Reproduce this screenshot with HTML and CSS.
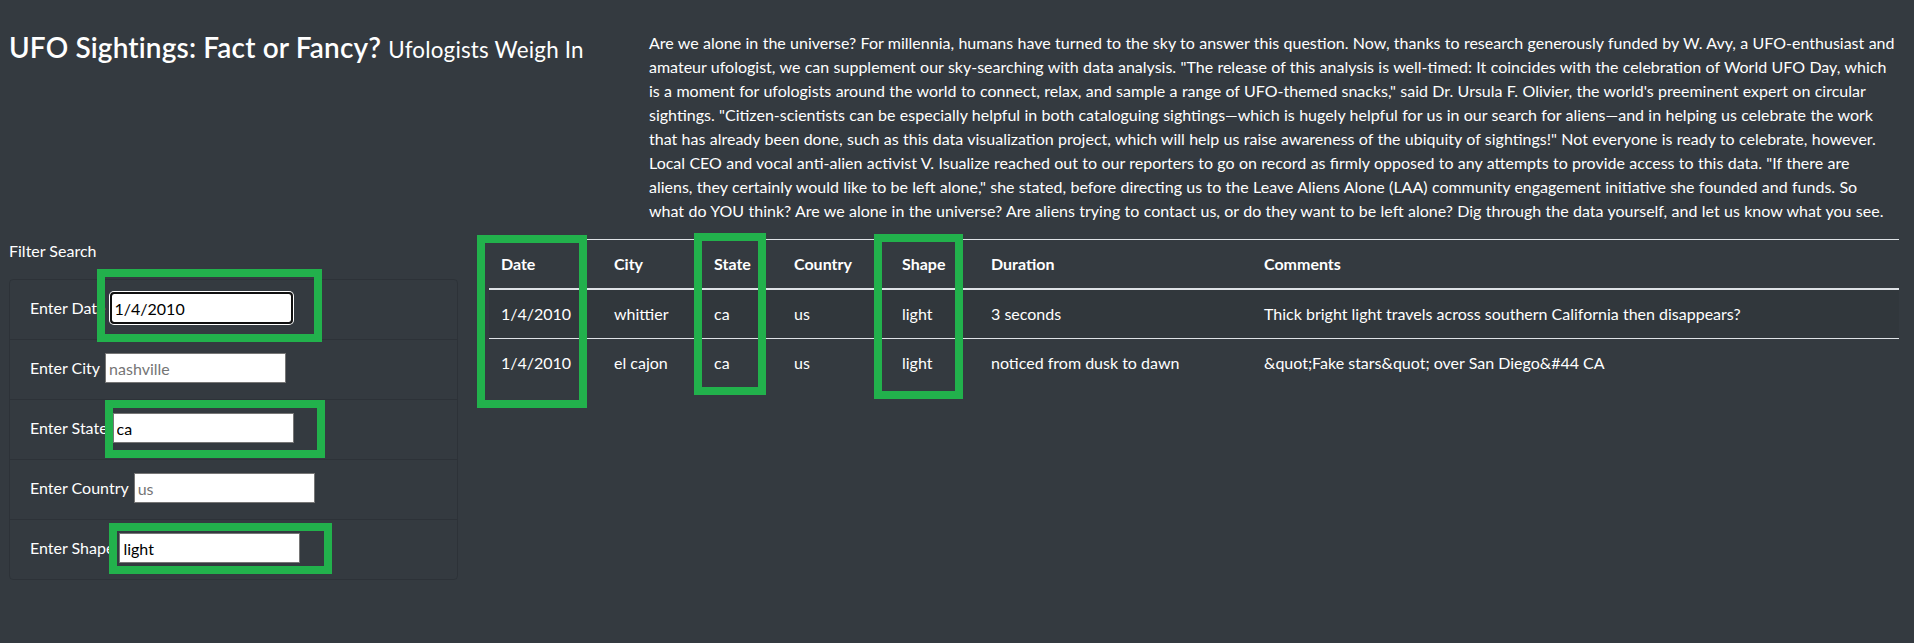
FILE: index.html
```html
<!DOCTYPE html>
<html lang="en">
<head>
<meta charset="utf-8">
<title>UFO Sightings: Fact or Fancy?</title>
<link rel="stylesheet" href="styles.css">
</head>
<body>
<div class="page">
  <header class="intro">
    <h3 class="title">UFO Sightings: Fact or Fancy? <small class="subtitle">Ufologists Weigh In</small></h3>
    <p class="lead-text">Are we alone in the universe? For millennia, humans have turned to the sky to answer this question. Now, thanks to research generously funded by W. Avy, a UFO-enthusiast and amateur ufologist, we can supplement our sky-searching with data analysis. "The release of this analysis is well-timed: It coincides with the celebration of World UFO Day, which is a moment for ufologists around the world to connect, relax, and sample a range of UFO-themed snacks," said Dr. Ursula F. Olivier, the world's preeminent expert on circular sightings. "Citizen-scientists can be especially helpful in both cataloguing sightings—which is hugely helpful for us in our search for aliens—and in helping us celebrate the work that has already been done, such as this data visualization project, which will help us raise awareness of the ubiquity of sightings!" Not everyone is ready to celebrate, however. Local CEO and vocal anti-alien activist V. Isualize reached out to our reporters to go on record as firmly opposed to any attempts to provide access to this data. "If there are aliens, they certainly would like to be left alone," she stated, before directing us to the Leave Aliens Alone (LAA) community engagement initiative she founded and funds. So what do YOU think? Are we alone in the universe? Are aliens trying to contact us, or do they want to be left alone? Dig through the data yourself, and let us know what you see.</p>
  </header>

  <main class="content">
    <aside class="filters">
      <p class="filter-label">Filter Search</p>
      <ul class="filter-list">
        <li class="filter-item"><label class="filter-name" for="datetime">Enter Date</label><input id="datetime" class="filter-input is-active" type="text" value="1/4/2010"></li>
        <li class="filter-item"><label class="filter-name" for="city">Enter City</label><input id="city" class="filter-input" type="text" placeholder="nashville"></li>
        <li class="filter-item"><label class="filter-name" for="state">Enter State</label><input id="state" class="filter-input" type="text" value="ca"></li>
        <li class="filter-item"><label class="filter-name" for="country">Enter Country</label><input id="country" class="filter-input" type="text" placeholder="us"></li>
        <li class="filter-item"><label class="filter-name" for="shape">Enter Shape</label><input id="shape" class="filter-input" type="text" value="light"></li>
      </ul>
    </aside>

    <table class="ufo-table">
      <colgroup>
        <col class="col-date">
        <col class="col-city">
        <col class="col-state">
        <col class="col-country">
        <col class="col-shape">
        <col class="col-duration">
        <col class="col-comments">
      </colgroup>
      <thead>
        <tr>
          <th>Date</th>
          <th>City</th>
          <th>State</th>
          <th>Country</th>
          <th>Shape</th>
          <th>Duration</th>
          <th>Comments</th>
        </tr>
      </thead>
      <tbody>
        <tr>
          <td>1/4/2010</td>
          <td>whittier</td>
          <td>ca</td>
          <td>us</td>
          <td>light</td>
          <td>3 seconds</td>
          <td>Thick bright light travels across southern California then disappears?</td>
        </tr>
        <tr>
          <td>1/4/2010</td>
          <td>el cajon</td>
          <td>ca</td>
          <td>us</td>
          <td>light</td>
          <td>noticed from dusk to dawn</td>
          <td>&amp;quot;Fake stars&amp;quot; over San Diego&amp;#44 CA</td>
        </tr>
      </tbody>
    </table>
  </main>

  <div class="mark mark-date-input"></div>
  <div class="mark mark-state-input"></div>
  <div class="mark mark-shape-input"></div>
  <div class="mark mark-date-col"></div>
  <div class="mark mark-state-col"></div>
  <div class="mark mark-shape-col"></div>
</div>
</body>
</html>
```

FILE: styles.css
```css
html, body {
  margin: 0;
  background: #343a40;
}

body {
  color: #fff;
  font-family: Lato, "Liberation Sans", sans-serif;
  font-size: 16px;
  line-height: 1.5;
}

.page {
  position: relative;
  box-sizing: border-box;
  min-height: 643px;
  padding: 31px 15px 0 9px;
}

/* header row */
.intro {
  display: grid;
  grid-template-columns: 1fr 1250px;
}

.title {
  margin: 0;
  font-size: 28px;
  font-weight: 600;
  line-height: 1.2;
  letter-spacing: 0.15px;
}

.subtitle {
  font-size: 80%;
  font-weight: 400;
  letter-spacing: 0.2px;
}

.lead-text {
  margin: 0 0 16px;
  padding-right: 3px;
  word-spacing: 0.25px;
}

/* content row */
.content {
  display: grid;
  grid-template-columns: 449px 1410px;
  column-gap: 31px;
  align-items: start;
}

.filter-label {
  margin: 0 0 16px;
}

.filter-list {
  list-style: none;
  margin: 0;
  padding: 0;
  border: 1px solid rgba(0, 0, 0, 0.125);
  border-radius: 4px;
}

.filter-item {
  display: flex;
  align-items: center;
  gap: 5px;
  height: 56px;
  padding: 0 20px 3px;
}

.filter-item + .filter-item {
  border-top: 1px solid rgba(0, 0, 0, 0.125);
}

.filter-input {
  box-sizing: border-box;
  width: 181px;
  height: 30px;
  margin: 0;
  padding: 0 3px;
  border: 1px solid #767676;
  border-radius: 0;
  background: #fff;
  color: #000;
  font-family: Lato, "Liberation Sans", sans-serif;
  font-size: 16px;
}

.filter-input::placeholder {
  color: #757575;
}

.filter-input.is-active {
  outline: 2px solid #101010;
  outline-offset: -1px;
  border-radius: 3px;
  box-shadow: 0 0 0 2px #fff;
}

/* table */
.ufo-table {
  width: 1410px;
  table-layout: fixed;
  border-collapse: separate;
  border-spacing: 0;
  color: #fff;
}

.col-date { width: 113px; }
.col-city { width: 100px; }
.col-state { width: 80px; }
.col-country { width: 108px; }
.col-shape { width: 89px; }
.col-duration { width: 273px; }
.col-comments { width: 647px; }

.ufo-table th,
.ufo-table td {
  padding: 12px;
  text-align: left;
  vertical-align: top;
  line-height: 24px;
  border-top: 1px solid #dee2e6;
}

.ufo-table th {
  font-weight: 700;
  border-bottom: 2px solid #dee2e6;
}

.ufo-table tbody tr:first-child td {
  border-top: 0;
}

.ufo-table tbody tr:nth-child(odd) td {
  background: rgba(0, 0, 0, 0.05);
}

/* green annotation boxes drawn over the screenshot */
.mark {
  position: absolute;
  box-sizing: border-box;
  border: 8px solid #22b14c;
  pointer-events: none;
}

.mark-date-input { left: 97px; top: 269px; width: 225px; height: 73px; }
.mark-state-input { left: 105px; top: 400px; width: 220px; height: 58px; }
.mark-shape-input { left: 109px; top: 523px; width: 223px; height: 51px; }
.mark-date-col { left: 477px; top: 235px; width: 110px; height: 173px; }
.mark-state-col { left: 694px; top: 233px; width: 72px; height: 162px; }
.mark-shape-col { left: 874px; top: 234px; width: 89px; height: 165px; }
```
